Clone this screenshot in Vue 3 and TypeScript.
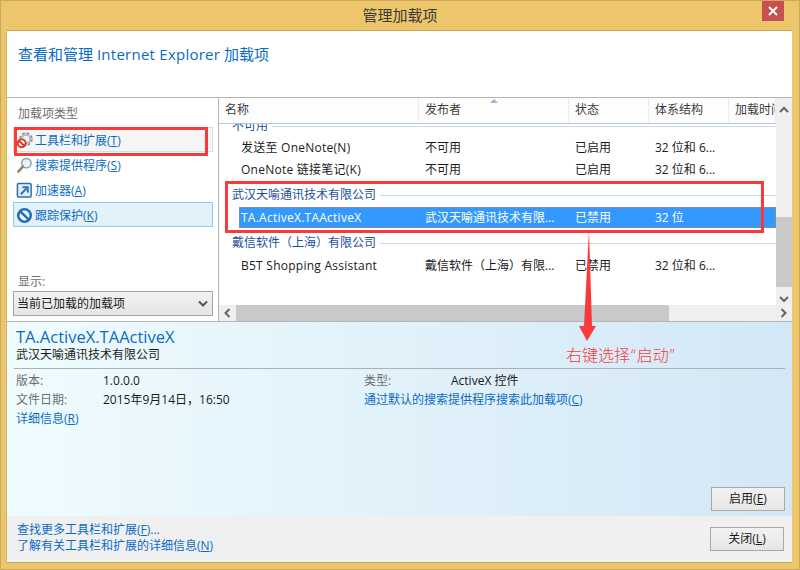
<template>
  <div class="window">
    <div class="titlebar">
      <span />
      <span class="title">管理加载项</span>
      <button class="close" aria-label="关闭">
        <svg width="10" height="10" viewBox="0 0 10 10"><path d="M1 1 9 9M9 1 1 9" stroke="#fff" stroke-width="2" /></svg>
      </button>
    </div>

    <div class="body">
      <header class="intro">查看和管理 <span class="en">Internet Explorer</span> 加载项</header>

      <div class="main">
        <aside class="side">
          <div class="side-label">加载项类型</div>
          <ul class="types">
            <li class="type hover">
              <svg class="ico" viewBox="0 0 18 18">
                <circle cx="10.5" cy="7.5" r="5.6" fill="none" stroke="#87929e" stroke-width="3.4" stroke-dasharray="2.6 1.8" />
                <circle cx="10.5" cy="7.5" r="4.6" fill="none" stroke="#b4bdc6" stroke-width="2.4" />
                <circle cx="6" cy="12" r="4.2" fill="#fff" stroke="#d9322b" stroke-width="2" />
                <path d="M3.2 9.4 8.8 14.6" stroke="#d9322b" stroke-width="2" />
              </svg>
              <span>工具栏和扩展(<u>T</u>)</span>
            </li>
            <li class="type">
              <svg class="ico" viewBox="0 0 18 18">
                <circle cx="11" cy="6.5" r="5" fill="#e6f1f8" stroke="#8d9aa3" stroke-width="1.5" />
                <path d="M7.5 10 2.5 15.5" stroke="#8a8478" stroke-width="2.6" stroke-linecap="round" />
              </svg>
              <span>搜索提供程序(<u>S</u>)</span>
            </li>
            <li class="type">
              <svg class="ico" viewBox="0 0 18 18">
                <rect x="1.5" y="1.5" width="14.5" height="14.5" rx="1.5" fill="#dfeefa" stroke="#2f6fa8" stroke-width="1.6" />
                <path d="M5 13 11 7M7 5.5H12.5V11" fill="none" stroke="#2f6fa8" stroke-width="2" />
              </svg>
              <span>加速器(<u>A</u>)</span>
            </li>
            <li class="type active">
              <svg class="ico" viewBox="0 0 18 18">
                <circle cx="9" cy="9" r="6.6" fill="#fff" stroke="#1f70b8" stroke-width="2.8" />
                <path d="M4.4 4.6 13.6 13.4" stroke="#1f70b8" stroke-width="2.8" />
              </svg>
              <span>跟踪保护(<u>K</u>)</span>
            </li>
          </ul>
          <div class="side-label show">显示:</div>
          <div class="select">
            <span>当前已加载的加载项</span>
            <svg width="10" height="8" viewBox="0 0 10 8"><path d="M1 1.5 5 5.5 9 1.5" fill="none" stroke="#555" stroke-width="2" /></svg>
          </div>
        </aside>

        <section class="list-wrap">
          <div class="list-inner">
            <div class="list">
              <div class="cols head">
                <span v-for="c in columns" :key="c" class="hcell">{{ c }}</span>
                <svg class="sort" width="8" height="4" viewBox="0 0 8 4"><path d="M4 0 8 4H0Z" fill="#9fb6d0" /></svg>
              </div>
              <div class="head-rule" />
              <div class="rows">
                <div class="group clipped"><span>不可用</span><i /></div>
                <div v-for="r in rowsA" :key="r.name" class="cols row">
                  <span class="name">{{ r.name }}</span>
                  <span>{{ r.publisher }}</span>
                  <span>{{ r.status }}</span>
                  <span>{{ r.arch }}</span>
                </div>
                <div class="group first"><span>武汉天喻通讯技术有限公司</span><i /></div>
                <div class="cols row selected">
                  <span class="name">TA.ActiveX.TAActiveX</span>
                  <span>武汉天喻通讯技术有限...</span>
                  <span>已禁用</span>
                  <span>32 位</span>
                </div>
                <div class="group second"><span>戴信软件（上海）有限公司</span><i /></div>
                <div class="cols row last">
                  <span class="name">B5T Shopping Assistant</span>
                  <span>戴信软件（上海）有限...</span>
                  <span>已禁用</span>
                  <span>32 位和 6...</span>
                </div>
              </div>
            </div>
            <div class="vbar">
              <svg width="12" height="8" viewBox="0 0 12 8"><path d="M2 6 6 2 10 6" fill="none" stroke="#666" stroke-width="2" /></svg>
              <div class="vtrack"><div class="vthumb" /></div>
              <svg width="12" height="8" viewBox="0 0 12 8"><path d="M2 2 6 6 10 2" fill="none" stroke="#666" stroke-width="2" /></svg>
            </div>
          </div>
          <div class="hbar">
            <svg width="8" height="12" viewBox="0 0 8 12"><path d="M6 2 2 6 6 10" fill="none" stroke="#666" stroke-width="2" /></svg>
            <div class="htrack"><div class="hthumb" /></div>
            <svg width="8" height="12" viewBox="0 0 8 12"><path d="M2 2 6 6 2 10" fill="none" stroke="#666" stroke-width="2" /></svg>
          </div>
        </section>
      </div>

      <section class="detail">
        <div class="d-title">TA.ActiveX.TAActiveX</div>
        <div class="d-sub">武汉天喻通讯技术有限公司</div>
        <div class="d-rule" />
        <div class="d-grid">
          <span class="lbl">版本:</span>
          <span>1.0.0.0</span>
          <span class="lbl">类型:</span>
          <span>ActiveX 控件</span>
          <span class="lbl">文件日期:</span>
          <span>2015年9月14日，16:50</span>
          <a class="link wide">通过默认的搜索提供程序搜索此加载项(<u>C</u>)</a>
          <a class="link more">详细信息(<u>R</u>)</a>
        </div>
        <div class="d-actions"><button class="btn">启用(<u>E</u>)</button></div>
      </section>

      <footer class="foot">
        <div class="foot-links">
          <a class="link">查找更多工具栏和扩展(<u>F</u>)...</a>
          <a class="link">了解有关工具栏和扩展的详细信息(<u>N</u>)</a>
        </div>
        <button class="btn">关闭(<u>L</u>)</button>
      </footer>
    </div>

    <!-- red annotations drawn over the screenshot -->
    <div class="mark mark-a" />
    <div class="mark mark-b" />
    <svg class="arrow" width="20" height="115" viewBox="0 0 20 115">
      <path d="M10 0 13 96H17L8 111 0 96H5Z" fill="#f93a3a" />
    </svg>
    <div class="note">右键选择<span class="q">“</span>启动<span class="q">”</span></div>
  </div>
</template>

<script setup lang="ts">
interface Row {
  name: string
  publisher: string
  status: string
  arch: string
}

const columns = ['名称', '发布者', '状态', '体系结构', '加载时间']

const rowsA: Row[] = [
  { name: '发送至 OneNote(N)', publisher: '不可用', status: '已启用', arch: '32 位和 6...' },
  { name: 'OneNote 链接笔记(K)', publisher: '不可用', status: '已启用', arch: '32 位和 6...' },
]
</script>

<style>
html,
body {
  margin: 0;
  background: #edc56b;
}
</style>

<style scoped>
.window {
  position: relative;
  width: 800px;
  height: 570px;
  box-sizing: border-box;
  display: flex;
  flex-direction: column;
  background: #edc56b;
  border: 1px solid #c9a95c;
  overflow: hidden;
  font: 12px/16px "Open Sans", "Noto Sans CJK SC", sans-serif;
  color: #1a1a1a;
}

.titlebar {
  height: 29px;
  flex: none;
  display: grid;
  grid-template-columns: 1fr auto 1fr;
}

.title {
  font-size: 15px;
  line-height: 29px;
  color: #3a3a3a;
}

.close {
  justify-self: end;
  width: 22px;
  height: 20px;
  margin-right: 15px;
  padding: 0;
  border: 0;
  background: #c75050;
  display: flex;
  align-items: center;
  justify-content: center;
}

.body {
  flex: 1;
  min-height: 0;
  margin: 0 7px 7px 6px;
  display: flex;
  flex-direction: column;
  background: #fff;
  border-top: 1px solid #c9a95c;
  box-shadow: 0 1px 0 #c9a95c, -1px 0 0 #d6b368;
}

.intro {
  height: 67px;
  flex: none;
  box-sizing: border-box;
  padding: 13px 0 0 11px;
  font-size: 15px;
  line-height: 20px;
  color: #0a6bc4;
  border-bottom: 1px solid #b4b4b4;
}

.en {
  letter-spacing: 0.25px;
}

.main {
  height: 223px;
  flex: none;
  display: flex;
  border-bottom: 1px solid #b4b4b4;
}

.side {
  width: 212px;
  flex: none;
  box-sizing: border-box;
  padding: 8px 5px 0 6px;
  border-right: 1px solid #b4b4b4;
  display: flex;
  flex-direction: column;
}

.side-label {
  padding-left: 5px;
  color: #6e6e6e;
}

.types {
  list-style: none;
  margin: 5px 0 0;
  padding: 0;
}

.type {
  height: 25px;
  box-sizing: border-box;
  display: flex;
  align-items: center;
  gap: 2px;
  padding: 2px 0 0 2px;
  border: 1px solid transparent;
  color: #0a6bc4;
}

.type.hover {
  background: #f5f5f5;
  border-color: #dcdcdc;
}

.type.active {
  background: #e3f2fa;
  border-color: #8fcdf0;
}

.ico {
  width: 17px;
  height: 17px;
  flex: none;
}

.side-label.show {
  margin-top: auto;
}

.select {
  height: 25px;
  box-sizing: border-box;
  margin: 1px 0 5px;
  padding: 0 4px 0 3px;
  display: flex;
  align-items: center;
  justify-content: space-between;
  border: 1px solid #a6a6a6;
  background: linear-gradient(#f2f2f2, #e5e5e5);
}

.list-wrap {
  flex: 1;
  min-width: 0;
  display: flex;
  flex-direction: column;
}

.list-inner {
  flex: 1;
  min-height: 0;
  display: flex;
}

.list {
  flex: 1;
  min-width: 0;
  overflow: hidden;
}

.cols {
  display: grid;
  grid-template-columns: 200px 150px 80px 80px 1fr;
}

.head {
  position: relative;
  height: 24px;
  background: #fdfdfe;
  align-items: stretch;
}

.hcell {
  padding-left: 6px;
  line-height: 24px;
  white-space: nowrap;
  overflow: hidden;
  border-right: 1px solid #e6ebf4;
  color: #3c3c3c;
}

.sort {
  position: absolute;
  left: 271px;
  top: 1px;
}

.head-rule {
  height: 1px;
  margin-top: 1px;
  background: #b8c6e6;
}

.rows {
  height: 181px;
  overflow: hidden;
}

.row {
  height: 22px;
  align-items: center;
  white-space: nowrap;
}

.row > span {
  padding-left: 6px;
  overflow: hidden;
}

.row > .name {
  padding-left: 22px;
  letter-spacing: 0.25px;
}

.row.selected {
  height: 21px;
  margin: 1px 0 0 20px;
  grid-template-columns: 180px 150px 80px 80px 1fr;
  background: #3399ff;
  color: #fff;
  outline: 1px dotted #c9853f;
  outline-offset: -1px;
}

.row.selected > .name {
  padding-left: 2px;
}

.row.last {
  margin-top: 1px;
}

.group {
  height: 22px;
  display: flex;
  align-items: center;
  gap: 4px;
  padding-left: 13px;
  color: #1c4ea0;
  white-space: nowrap;
}

.group i {
  flex: 1;
  height: 1px;
  background: #c8d3ec;
}

.group.clipped {
  margin-top: -9px;
}

.group.first {
  margin-top: 3px;
}

.group.second {
  margin-top: 4px;
}

.vbar {
  width: 16px;
  flex: none;
  display: flex;
  flex-direction: column;
  align-items: center;
  background: #efefef;
}

.vbar > svg {
  height: 24px;
  flex: none;
}

.vtrack {
  flex: 1;
  width: 100%;
  box-sizing: border-box;
  padding-top: 95px;
}

.vthumb {
  height: 70px;
  background: #c9c9c9;
}

.hbar {
  height: 16px;
  flex: none;
  display: flex;
  align-items: center;
  background: #efefef;
}

.hbar > svg {
  width: 17px;
  flex: none;
}

.htrack {
  flex: 1;
  height: 100%;
}

.hthumb {
  width: 433px;
  height: 100%;
  background: #c9c9c9;
}

.detail {
  flex: 1;
  min-height: 0;
  box-sizing: border-box;
  padding: 5px 7px 5px 9px;
  display: flex;
  flex-direction: column;
  background: linear-gradient(90deg, #effcff, #d3e7f6);
}

.d-title {
  font-size: 16.5px;
  line-height: 20px;
  color: #0a6bc4;
}

.d-sub {
  line-height: 16px;
}

.d-rule {
  height: 1px;
  margin: 5px 0 3px -2px;
  background: #b0b0b0;
}

.d-grid {
  display: grid;
  grid-template-columns: 87px 261px 87px 1fr;
  grid-auto-rows: 18.5px;
  align-items: center;
}

.lbl {
  color: #6e6e6e;
}

.wide {
  grid-column: 3 / 5;
}

.more {
  grid-column: 1 / 3;
  margin-top: 1px;
}

.link {
  color: #0a6bc4;
}

.d-actions {
  margin-top: auto;
  display: flex;
  justify-content: flex-end;
}

.btn {
  width: 74px;
  height: 24px;
  padding: 0;
  box-sizing: border-box;
  border: 1px solid #a9a9a9;
  background: linear-gradient(#f2f2f2, #e6e6e6);
  font: inherit;
  color: #1a1a1a;
}

.foot {
  height: 46px;
  flex: none;
  box-sizing: border-box;
  padding: 6px 8px 0 10px;
  display: flex;
  justify-content: space-between;
  align-items: flex-start;
  background: #f0f0f0;
}

.foot-links {
  display: flex;
  flex-direction: column;
}

.foot .btn {
  margin-top: 5px;
}

.mark {
  position: absolute;
  box-sizing: border-box;
  border: 3px solid #f93a3a;
}

.mark-a {
  left: 13px;
  top: 126px;
  width: 194px;
  height: 29px;
}

.mark-b {
  left: 224px;
  top: 180px;
  width: 539px;
  height: 52px;
}

.arrow {
  position: absolute;
  left: 578px;
  top: 229px;
}

.note {
  position: absolute;
  left: 565px;
  top: 343px;
  font-size: 16px;
  line-height: 22px;
  font-weight: 300;
  color: #f93a3a;
}

.q {
  margin: 0 1px;
}
</style>
